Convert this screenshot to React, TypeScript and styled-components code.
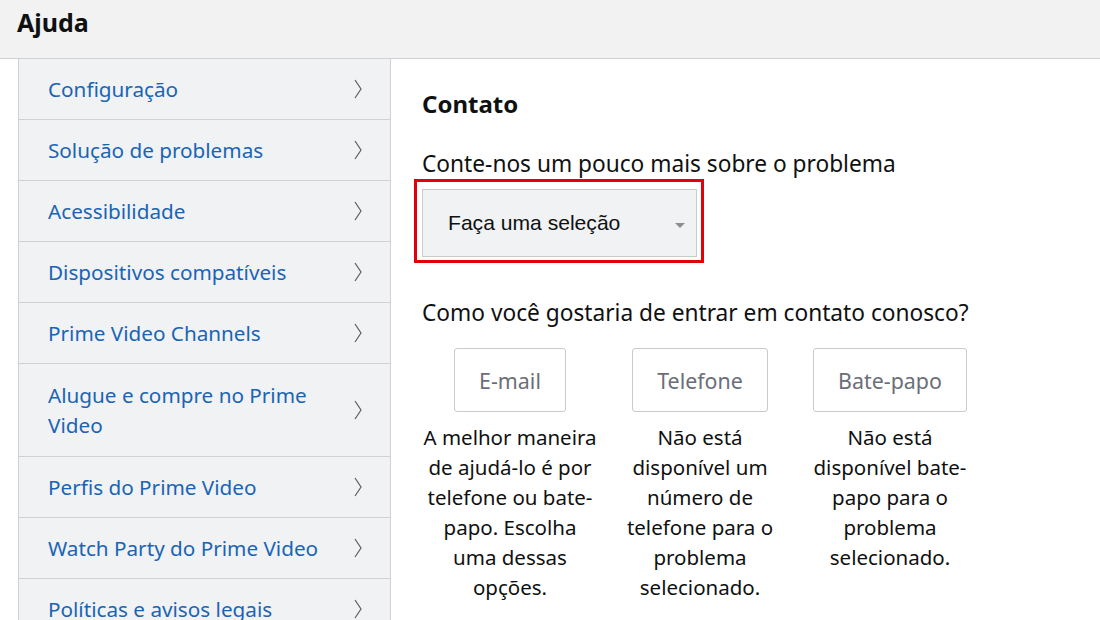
import React from "react";
import styled, { createGlobalStyle } from "styled-components";

const Global = createGlobalStyle`
  html, body { margin: 0; padding: 0; background: #fff; overflow: hidden; }
  body { font-family: "Noto Sans", "Open Sans", sans-serif; color: #0f1111; }
`;

const Page = styled.div`
  width: 1100px;
  height: 620px;
  overflow: hidden;
  display: flex;
  flex-direction: column;
`;

const Header = styled.header`
  flex: none;
  height: 59px;
  box-sizing: border-box;
  background: #f2f2f3;
  border-bottom: 1px solid #cfd1d3;
  display: flex;
  align-items: center;
  padding-left: 17px;
  padding-bottom: 14px;
`;

const Title = styled.h1`
  margin: 0;
  font-size: 25px;
  font-weight: 700;
  color: #0f1111;
`;

const Main = styled.div`
  display: flex;
  flex: 1;
  min-height: 0;
`;

const Sidebar = styled.nav`
  margin-left: 18px;
  width: 373px;
  flex: none;
  box-sizing: border-box;
  border-left: 1px solid #cfd1d3;
  border-right: 1px solid #cfd1d3;
  background: #f0f2f4;
  display: flex;
  flex-direction: column;
`;

const NavRow = styled.a`
  display: flex;
  align-items: center;
  justify-content: space-between;
  min-height: 61px;
  padding: 0 28px 0 29px;
  border-bottom: 1px solid #cfd1d3;
  box-sizing: border-box;
  text-decoration: none;
  color: #1a64b4;
  font-size: 20.7px;
  line-height: 30px;
  flex: none;
`;

const NavLabel = styled.span<{ $wrap?: boolean }>`
  max-width: ${(p) => (p.$wrap ? "265px" : "none")};
  padding: ${(p) => (p.$wrap ? "16px 0" : "0")};
`;

const Chevron = () => (
  <svg width="8" height="20" viewBox="0 0 8 20" style={{ flex: "none" }}>
    <polyline points="1,1 7,10 1,19" fill="none" stroke="#5a5d63" strokeWidth="1.2" />
  </svg>
);

const Content = styled.section`
  padding: 30px 0 0 31px;
  display: flex;
  flex-direction: column;
`;

const Heading = styled.h2`
  margin: 0;
  font-size: 24px;
  font-weight: 700;
  line-height: 30px;
`;

const Label = styled.p<{ $top: number }>`
  margin: ${(p) => p.$top}px 0 0;
  font-size: 22.7px;
  line-height: 30px;
`;

const Highlight = styled.div`
  align-self: flex-start;
  margin-left: -8px;
  border: 3px solid #e3000b;
  padding: 7px 4px 3px 5px;
`;

const Select = styled.div`
  width: 275px;
  height: 68px;
  box-sizing: border-box;
  background: #f0f2f4;
  border: 1px solid #c8cacc;
  display: flex;
  align-items: center;
  justify-content: space-between;
  padding: 0 11px 0 25px;
  font-family: "Liberation Sans", Arial, sans-serif;
  font-size: 21.1px;
  color: #0f1111;
`;

const Caret = styled.span`
  width: 0;
  height: 0;
  border-left: 5px solid transparent;
  border-right: 5px solid transparent;
  border-top: 5px solid #8a8d91;
  margin-top: 4px;
`;

const Options = styled.div`
  display: grid;
  grid-template-columns: repeat(3, 176px);
  column-gap: 14px;
  margin-top: 20px;
`;

const Option = styled.div`
  display: flex;
  flex-direction: column;
  align-items: center;
  text-align: center;
`;

const OptButton = styled.button`
  height: 64px;
  padding: 0 24px;
  background: #fff;
  border: 1px solid #c8cacc;
  border-radius: 3px;
  font-family: inherit;
  font-size: 21.4px;
  color: #6b6e78;
`;

const Desc = styled.p`
  margin: 10px 0 0;
  font-size: 20.5px;
  line-height: 30px;
  color: #0f1111;
`;

const nav = [
  "Configuração",
  "Solução de problemas",
  "Acessibilidade",
  "Dispositivos compatíveis",
  "Prime Video Channels",
  "Alugue e compre no Prime Video",
  "Perfis do Prime Video",
  "Watch Party do Prime Video",
  "Políticas e avisos legais",
];

const opts = [
  { b: "E-mail", d: "A melhor maneira de ajudá-lo é por telefone ou bate-papo. Escolha uma dessas opções." },
  { b: "Telefone", d: "Não está disponível um número de telefone para o problema selecionado." },
  { b: "Bate-papo", d: "Não está disponível bate-papo para o problema selecionado." },
];

export default function App() {
  return (
    <Page>
      <Global />
      <Header>
        <Title>Ajuda</Title>
      </Header>
      <Main>
        <Sidebar>
          {nav.map((n) => (
            <NavRow key={n} href="#">
              <NavLabel $wrap={n.length > 28}>{n}</NavLabel>
              <Chevron />
            </NavRow>
          ))}
        </Sidebar>
        <Content>
          <Heading>Contato</Heading>
          <Label $top={30}>Conte-nos um pouco mais sobre o problema</Label>
          <Highlight>
            <Select>
              Faça uma seleção
              <Caret />
            </Select>
          </Highlight>
          <Label $top={35}>Como você gostaria de entrar em contato conosco?</Label>
          <Options>
            {opts.map((o) => (
              <Option key={o.b}>
                <OptButton>{o.b}</OptButton>
                <Desc>{o.d}</Desc>
              </Option>
            ))}
          </Options>
        </Content>
      </Main>
    </Page>
  );
}
